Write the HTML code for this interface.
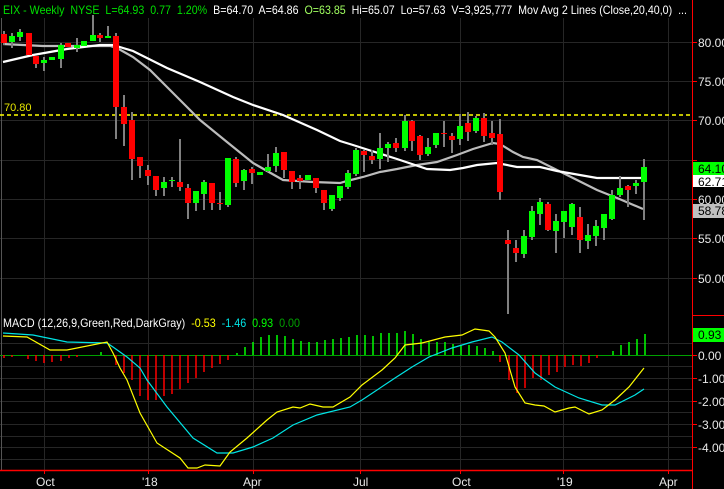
<!DOCTYPE html>
<html><head><meta charset="utf-8"><style>
html,body{margin:0;padding:0;background:#000;width:724px;height:489px;overflow:hidden}
svg{display:block;font-family:"Liberation Sans",Arial,sans-serif}
</style></head><body>
<svg width="724" height="489" viewBox="0 0 724 489" xmlns="http://www.w3.org/2000/svg">
<rect width="724" height="489" fill="#000"/>
<g stroke="#262626" stroke-width="1">
<line x1="44.5" y1="18" x2="44.5" y2="470"/><line x1="148.5" y1="18" x2="148.5" y2="470"/>
<line x1="253.5" y1="18" x2="253.5" y2="470"/><line x1="360.5" y1="18" x2="360.5" y2="470"/>
<line x1="460.5" y1="18" x2="460.5" y2="470"/><line x1="563.5" y1="18" x2="563.5" y2="470"/>
<line x1="668.5" y1="18" x2="668.5" y2="470"/>
<line x1="0" y1="42.5" x2="692" y2="42.5"/><line x1="0" y1="81.5" x2="692" y2="81.5"/>
<line x1="0" y1="120.5" x2="692" y2="120.5"/><line x1="0" y1="160.5" x2="692" y2="160.5"/>
<line x1="0" y1="199.5" x2="692" y2="199.5"/><line x1="0" y1="238.5" x2="692" y2="238.5"/>
<line x1="0" y1="278.5" x2="692" y2="278.5"/>
<line x1="0" y1="343.5" x2="692" y2="343.5"/><line x1="0" y1="366.5" x2="692" y2="366.5"/>
<line x1="0" y1="378.5" x2="692" y2="378.5"/><line x1="0" y1="389.5" x2="692" y2="389.5"/>
<line x1="0" y1="401.5" x2="692" y2="401.5"/><line x1="0" y1="412.5" x2="692" y2="412.5"/>
<line x1="0" y1="424.5" x2="692" y2="424.5"/><line x1="0" y1="436.5" x2="692" y2="436.5"/>
<line x1="0" y1="447.5" x2="692" y2="447.5"/><line x1="0" y1="459.5" x2="692" y2="459.5"/>
</g>
<line x1="1.5" y1="18" x2="1.5" y2="470" stroke="#555"/>
<line x1="0" y1="115" x2="692" y2="115" stroke="#ffff00" stroke-width="1.5" stroke-dasharray="4,3"/>
<text x="4" y="111" fill="#e6e600" font-size="11">70.80</text>
<polyline fill="none" stroke="#bcbcbc" stroke-width="2.2" points="3,44 43,46 110,46 117,48 133,57 150,70 167,87 187,107 200,120 227,142 253,163 283,180 313,182 340,183 347,181 363,177 380,172 397,169 417,165 437,162 457,155 473,149 493,143 500,144 513,152 523,157 537,160 557,170 577,180 597,190 617,198 643,209"/>
<polyline fill="none" stroke="#ffffff" stroke-width="2.2" points="3,62 33,55 67,49 100,45 113,45 133,51 167,68 200,82 233,97 253,105 283,115 317,130 340,141 353,145 397,159 427,169 450,170 463,168 477,165 497,163 517,167 540,167 557,171 597,178 643,178"/>
<g>
<g fill="#808080">
<rect x="3" y="31" width="2" height="14"/><rect x="11" y="33" width="2" height="15"/><rect x="19" y="29" width="2" height="12"/><rect x="28" y="33" width="2" height="22"/><rect x="35" y="56" width="2" height="12"/><rect x="43" y="57" width="2" height="14"/><rect x="51" y="57" width="2" height="3"/><rect x="60" y="43" width="2" height="25"/><rect x="67" y="43" width="2" height="4"/><rect x="76" y="38" width="2" height="14"/><rect x="83" y="41" width="2" height="5"/><rect x="92" y="15" width="2" height="26"/><rect x="99" y="33" width="2" height="9"/><rect x="107" y="26" width="2" height="12"/><rect x="115" y="33" width="2" height="106"/><rect x="123" y="95" width="2" height="51"/><rect x="131" y="112" width="2" height="68"/><rect x="139" y="157" width="2" height="21"/><rect x="147" y="165" width="2" height="20"/><rect x="155" y="176" width="2" height="20"/><rect x="163" y="177" width="2" height="19"/><rect x="171" y="177" width="2" height="10"/><rect x="179" y="139" width="2" height="52"/><rect x="187" y="184" width="2" height="35"/><rect x="195" y="191" width="2" height="20"/><rect x="203" y="180" width="2" height="30"/><rect x="211" y="183" width="2" height="27"/><rect x="219" y="192" width="2" height="18"/><rect x="227" y="158" width="2" height="49"/><rect x="235" y="157" width="2" height="30"/><rect x="243" y="169" width="2" height="21"/><rect x="251" y="167" width="2" height="17"/><rect x="259" y="172" width="2" height="3"/><rect x="267" y="154" width="2" height="18"/><rect x="275" y="147" width="2" height="25"/><rect x="283" y="152" width="2" height="26"/><rect x="291" y="171" width="2" height="18"/><rect x="299" y="175" width="2" height="14"/><rect x="307" y="175" width="2" height="5"/><rect x="315" y="178" width="2" height="15"/><rect x="323" y="190" width="2" height="20"/><rect x="331" y="195" width="2" height="16"/><rect x="339" y="186" width="2" height="15"/><rect x="347" y="170" width="2" height="19"/><rect x="355" y="148" width="2" height="28"/><rect x="363" y="150" width="2" height="22"/><rect x="371" y="150" width="2" height="14"/><rect x="379" y="133" width="2" height="36"/><rect x="387" y="142" width="2" height="20"/><rect x="395" y="138" width="2" height="14"/><rect x="404" y="115" width="2" height="36"/><rect x="411" y="120" width="2" height="31"/><rect x="419" y="135" width="2" height="25"/><rect x="427" y="138" width="2" height="18"/><rect x="435" y="133" width="2" height="15"/><rect x="443" y="121" width="2" height="26"/><rect x="451" y="133" width="2" height="20"/><rect x="459" y="114" width="2" height="31"/><rect x="467" y="112" width="2" height="29"/><rect x="475" y="116" width="2" height="17"/><rect x="483" y="113" width="2" height="29"/><rect x="491" y="121" width="2" height="24"/><rect x="499" y="119" width="2" height="81"/><rect x="507" y="230" width="2" height="84"/><rect x="515" y="240" width="2" height="22"/><rect x="523" y="230" width="2" height="28"/><rect x="531" y="206" width="2" height="34"/><rect x="539" y="198" width="2" height="27"/><rect x="547" y="202" width="2" height="29"/><rect x="555" y="214" width="2" height="39"/><rect x="563" y="211" width="2" height="27"/><rect x="571" y="203" width="2" height="32"/><rect x="579" y="207" width="2" height="46"/><rect x="587" y="224" width="2" height="25"/><rect x="595" y="220" width="2" height="26"/><rect x="603" y="214" width="2" height="26"/><rect x="611" y="190" width="2" height="30"/><rect x="619" y="176" width="2" height="21"/><rect x="627" y="185" width="2" height="22"/><rect x="635" y="180" width="2" height="14"/><rect x="643" y="159" width="2" height="61"/>
</g>
<g fill="#ff0000">
<rect x="1" y="34" width="6" height="9"/><rect x="26" y="33" width="6" height="22"/><rect x="33" y="56" width="6" height="8"/><rect x="65" y="43" width="6" height="4"/><rect x="97" y="35" width="6" height="3"/><rect x="113" y="36" width="6" height="71"/><rect x="121" y="107" width="6" height="17"/><rect x="129" y="120" width="6" height="39"/><rect x="137" y="157" width="6" height="9"/><rect x="145" y="170" width="6" height="6"/><rect x="153" y="176" width="6" height="14"/><rect x="177" y="182" width="6" height="5"/><rect x="185" y="188" width="6" height="15"/><rect x="209" y="183" width="6" height="20"/><rect x="217" y="203" width="6" height="1"/><rect x="233" y="159" width="6" height="24"/><rect x="249" y="169" width="6" height="4"/><rect x="281" y="152" width="6" height="18"/><rect x="289" y="171" width="6" height="11"/><rect x="297" y="178" width="6" height="3"/><rect x="313" y="178" width="6" height="10"/><rect x="321" y="190" width="6" height="13"/><rect x="361" y="151" width="6" height="4"/><rect x="369" y="156" width="6" height="4"/><rect x="393" y="143" width="6" height="5"/><rect x="409" y="121" width="6" height="20"/><rect x="417" y="136" width="6" height="19"/><rect x="441" y="133" width="6" height="1"/><rect x="449" y="136" width="6" height="4"/><rect x="465" y="123" width="6" height="9"/><rect x="481" y="118" width="6" height="18"/><rect x="489" y="133" width="6" height="5"/><rect x="497" y="134" width="6" height="58"/><rect x="505" y="240" width="6" height="4"/><rect x="513" y="248" width="6" height="5"/><rect x="545" y="204" width="6" height="26"/><rect x="577" y="217" width="6" height="23"/><rect x="625" y="186" width="6" height="4"/>
</g>
<g fill="#00ff00">
<rect x="9" y="36" width="6" height="6"/><rect x="17" y="32" width="6" height="5"/><rect x="41" y="60" width="6" height="3"/><rect x="49" y="57" width="6" height="3"/><rect x="58" y="45" width="6" height="14"/><rect x="74" y="45" width="6" height="3"/><rect x="81" y="41" width="6" height="5"/><rect x="90" y="35" width="6" height="6"/><rect x="105" y="36" width="6" height="2"/><rect x="161" y="182" width="6" height="6"/><rect x="169" y="180" width="6" height="1"/><rect x="193" y="191" width="6" height="12"/><rect x="201" y="182" width="6" height="12"/><rect x="225" y="158" width="6" height="47"/><rect x="241" y="170" width="6" height="11"/><rect x="257" y="172" width="6" height="3"/><rect x="265" y="167" width="6" height="4"/><rect x="273" y="153" width="6" height="13"/><rect x="305" y="175" width="6" height="5"/><rect x="329" y="195" width="6" height="14"/><rect x="337" y="186" width="6" height="12"/><rect x="345" y="173" width="6" height="14"/><rect x="353" y="150" width="6" height="24"/><rect x="377" y="148" width="6" height="11"/><rect x="385" y="144" width="6" height="4"/><rect x="402" y="121" width="6" height="27"/><rect x="425" y="147" width="6" height="7"/><rect x="433" y="133" width="6" height="12"/><rect x="457" y="126" width="6" height="13"/><rect x="473" y="118" width="6" height="13"/><rect x="521" y="236" width="6" height="18"/><rect x="529" y="211" width="6" height="26"/><rect x="537" y="202" width="6" height="12"/><rect x="553" y="221" width="6" height="10"/><rect x="561" y="211" width="6" height="11"/><rect x="569" y="204" width="6" height="23"/><rect x="585" y="235" width="6" height="6"/><rect x="593" y="226" width="6" height="10"/><rect x="601" y="214" width="6" height="14"/><rect x="609" y="195" width="6" height="24"/><rect x="617" y="188" width="6" height="7"/><rect x="633" y="183" width="6" height="3"/><rect x="641" y="167" width="6" height="15"/>
</g>
</g>
<line x1="0" y1="355.5" x2="692" y2="355.5" stroke="#00a000"/>
<g stroke="#ff0000" stroke-width="1.5">
<line x1="4" y1="355" x2="4" y2="358"/><line x1="12" y1="355" x2="12" y2="357"/><line x1="28" y1="355" x2="28" y2="359"/><line x1="36" y1="355" x2="36" y2="361"/><line x1="44" y1="355" x2="44" y2="363"/><line x1="52" y1="355" x2="52" y2="362"/><line x1="61" y1="355" x2="61" y2="361"/><line x1="69" y1="355" x2="69" y2="358"/><line x1="77" y1="355" x2="77" y2="357"/>
<line x1="116" y1="355" x2="116" y2="365"/><line x1="124" y1="355" x2="124" y2="373"/><line x1="132" y1="355" x2="132" y2="380"/><line x1="140" y1="355" x2="140" y2="396"/><line x1="148" y1="355" x2="148" y2="400"/><line x1="156" y1="355" x2="156" y2="400"/><line x1="164" y1="355" x2="164" y2="396"/><line x1="172" y1="355" x2="172" y2="394"/><line x1="180" y1="355" x2="180" y2="389"/><line x1="188" y1="355" x2="188" y2="383"/><line x1="196" y1="355" x2="196" y2="378"/><line x1="204" y1="355" x2="204" y2="372"/><line x1="212" y1="355" x2="212" y2="368"/><line x1="220" y1="355" x2="220" y2="364"/><line x1="228" y1="355" x2="228" y2="360"/>
<line x1="500" y1="355" x2="500" y2="362"/><line x1="509" y1="355" x2="509" y2="380"/><line x1="517" y1="355" x2="517" y2="393"/><line x1="525" y1="355" x2="525" y2="388"/><line x1="533" y1="355" x2="533" y2="378"/><line x1="541" y1="355" x2="541" y2="380"/><line x1="549" y1="355" x2="549" y2="375"/><line x1="557" y1="355" x2="557" y2="372"/><line x1="565" y1="355" x2="565" y2="367"/><line x1="573" y1="355" x2="573" y2="365"/><line x1="581" y1="355" x2="581" y2="366"/><line x1="589" y1="355" x2="589" y2="363"/><line x1="597" y1="355" x2="597" y2="358"/>
</g>
<g stroke="#00ff00" stroke-width="1.5">
<line x1="101" y1="355" x2="101" y2="352"/>
<line x1="237" y1="355" x2="237" y2="353"/><line x1="245" y1="355" x2="245" y2="347"/><line x1="253" y1="355" x2="253" y2="342"/><line x1="261" y1="355" x2="261" y2="337"/><line x1="269" y1="355" x2="269" y2="335"/><line x1="277" y1="355" x2="277" y2="335"/><line x1="285" y1="355" x2="285" y2="336"/><line x1="293" y1="355" x2="293" y2="339"/><line x1="301" y1="355" x2="301" y2="341"/><line x1="309" y1="355" x2="309" y2="342"/><line x1="317" y1="355" x2="317" y2="342"/><line x1="325" y1="355" x2="325" y2="340"/><line x1="333" y1="355" x2="333" y2="339"/><line x1="341" y1="355" x2="341" y2="338"/><line x1="349" y1="355" x2="349" y2="337"/><line x1="357" y1="355" x2="357" y2="335"/><line x1="365" y1="355" x2="365" y2="335"/><line x1="373" y1="355" x2="373" y2="336"/><line x1="381" y1="355" x2="381" y2="333"/><line x1="389" y1="355" x2="389" y2="333"/><line x1="397" y1="355" x2="397" y2="333"/><line x1="405" y1="355" x2="405" y2="331"/><line x1="413" y1="355" x2="413" y2="334"/><line x1="421" y1="355" x2="421" y2="339"/><line x1="429" y1="355" x2="429" y2="342"/><line x1="437" y1="355" x2="437" y2="342"/><line x1="445" y1="355" x2="445" y2="342"/><line x1="453" y1="355" x2="453" y2="344"/><line x1="461" y1="355" x2="461" y2="345"/><line x1="469" y1="355" x2="469" y2="345"/><line x1="477" y1="355" x2="477" y2="346"/><line x1="485" y1="355" x2="485" y2="348"/><line x1="493" y1="355" x2="493" y2="351"/>
<line x1="613" y1="355" x2="613" y2="351"/><line x1="621" y1="355" x2="621" y2="345"/><line x1="629" y1="355" x2="629" y2="342"/><line x1="637" y1="355" x2="637" y2="339"/><line x1="645" y1="355" x2="645" y2="334"/>
</g>
<polyline fill="none" stroke="#00e5e5" stroke-width="1.2" points="3,333 33,335 67,342 107,343 113,347 127,357 140,368 147,380 167,407 193,438 217,453 233,453 253,447 273,438 293,425 317,415 350,407 362,400 395,378 412,367 429,357 452,348 472,342 492,337 502,342 519,355 535,373 555,387 579,398 602,405 615,405 635,395 644,389"/>
<polyline fill="none" stroke="#ffff00" stroke-width="1.2" points="3,336 27,337 50,350 67,350 107,342 113,353 120,368 127,380 140,413 157,443 180,458 188,468 197,468 205,465 220,466 230,452 247,438 267,420 277,412 293,407 300,408 310,404 323,407 333,407 350,397 362,385 382,370 395,358 405,345 422,343 445,337 462,335 475,329 489,331 495,337 505,353 515,387 525,403 535,405 544,406 555,412 569,408 575,407 589,414 602,410 615,400 629,387 644,368"/>
<line x1="692.5" y1="0" x2="692.5" y2="489" stroke="#ff0000"/>
<line x1="692" y1="315.5" x2="724" y2="315.5" stroke="#ff0000"/>
<line x1="0" y1="470.5" x2="692" y2="470.5" stroke="#ff0000" stroke-width="1.5"/>
<g stroke="#ff0000"><line x1="44.5" y1="470" x2="44.5" y2="474"/><line x1="148.5" y1="470" x2="148.5" y2="474"/><line x1="253.5" y1="470" x2="253.5" y2="474"/><line x1="360.5" y1="470" x2="360.5" y2="474"/><line x1="460.5" y1="470" x2="460.5" y2="474"/><line x1="563.5" y1="470" x2="563.5" y2="474"/><line x1="668.5" y1="470" x2="668.5" y2="474"/>
<line x1="692" y1="42.5" x2="697" y2="42.5"/><line x1="692" y1="81.5" x2="697" y2="81.5"/><line x1="692" y1="120.5" x2="697" y2="120.5"/><line x1="692" y1="160.5" x2="697" y2="160.5"/><line x1="692" y1="199.5" x2="697" y2="199.5"/><line x1="692" y1="238.5" x2="697" y2="238.5"/><line x1="692" y1="278.5" x2="697" y2="278.5"/>
<line x1="692" y1="355.5" x2="697" y2="355.5"/><line x1="692" y1="378.5" x2="697" y2="378.5"/><line x1="692" y1="401.5" x2="697" y2="401.5"/><line x1="692" y1="424.5" x2="697" y2="424.5"/><line x1="692" y1="447.5" x2="697" y2="447.5"/></g>
<g fill="#e8e8e8" font-size="12">
<text x="698" y="47">80.00</text><text x="698" y="86">75.00</text><text x="698" y="125">70.00</text><text x="698" y="204">60.00</text><text x="698" y="243">55.00</text><text x="698" y="283">50.00</text>
<text x="698" y="360">0.00</text><text x="698" y="383">-1.00</text><text x="698" y="406">-2.00</text><text x="698" y="429">-3.00</text><text x="698" y="452">-4.00</text>
<text x="36" y="486">Oct</text><text x="142" y="486">'18</text><text x="243" y="486">Apr</text><text x="353" y="486">Jul</text><text x="452" y="486">Oct</text><text x="557" y="486">'19</text><text x="659" y="486">Apr</text>
</g>
<rect x="693" y="162" width="31" height="13" fill="#00ff00"/><text x="698" y="173" font-size="12" fill="#000">64.10</text>
<rect x="693" y="175" width="31" height="12" fill="#ffffff"/><text x="698" y="186" font-size="12" fill="#000">62.71</text>
<rect x="693" y="204" width="31" height="14" fill="#c0c0c0"/><text x="698" y="215" font-size="12" fill="#000">58.78</text>
<rect x="693" y="328" width="31" height="14" fill="#00ff00"/><text x="698" y="339" font-size="12" fill="#000">0.93</text>
<text x="3" y="14" font-size="12" fill="#00e000" xml:space="preserve" textLength="684" lengthAdjust="spacingAndGlyphs">EIX - Weekly  NYSE  L=64.93  0.77  1.20%  <tspan fill="#ffffff">B=64.70  A=64.86  </tspan><tspan fill="#a0ff60">O=63.85  </tspan><tspan fill="#ffffff">Hi=65.07  Lo=57.63  V=3,925,777  Mov Avg 2 Lines (Close,20,40,0)  ...</tspan></text>
<text x="3" y="327" font-size="12" fill="#ffffff" xml:space="preserve" textLength="297" lengthAdjust="spacingAndGlyphs">MACD (12,26,9,Green,Red,DarkGray)  <tspan fill="#ffff00">-0.53</tspan>  <tspan fill="#00e5e5">-1.46</tspan>  <tspan fill="#00ff00">0.93</tspan>  <tspan fill="#00a000">0.00</tspan></text>
</svg>
</body></html>
